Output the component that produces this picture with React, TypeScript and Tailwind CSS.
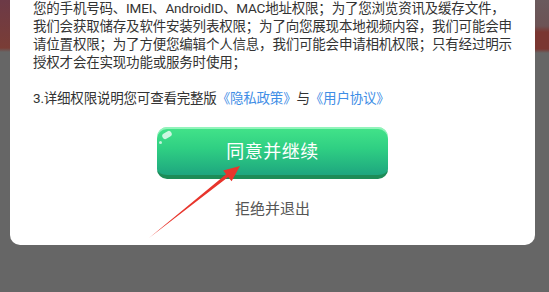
const lines = [
  "您的手机号码、IMEI、AndroidID、MAC地址权限；为了您浏览资讯及缓存文件，",
  "我们会获取储存及软件安装列表权限；为了向您展现本地视频内容，我们可能会申",
  "请位置权限；为了方便您编辑个人信息，我们可能会申请相机权限；只有经过明示",
  "授权才会在实现功能或服务时使用；",
];

const Arrow = () => (
  <svg
    className="absolute left-0 top-0 pointer-events-none"
    width="549"
    height="292"
    viewBox="0 0 549 292"
  >
    <polygon
      points="149,238 228.2,177.0 231.6,181.2 240,166 223.2,170.6 226.1,174.2"
      fill="#e8352c"
    />
  </svg>
);

const AgreeButton = () => (
  <button className="relative w-[231px] h-[52px] rounded-[10px] border-b-[4px] border-[#1d8c57] bg-[linear-gradient(to_bottom,#43e489,#2fcf83_45%,#1ea67f)] shadow-[inset_0_2px_0_rgba(200,255,220,0.6)] flex items-center justify-center">
    <span className="absolute left-[5px] top-[5px] w-[10px] h-[6px] rounded-full bg-white/75 -rotate-[30deg]" />
    <span className="absolute left-[2px] top-[14px] w-[3px] h-[3px] rounded-full bg-white/70" />
    <span className="text-[18px] leading-[24px] text-white tracking-[0.5px] mt-[1px]">
      同意并继续
    </span>
  </button>
);

export default function App() {
  return (
    <div
      className="relative w-[549px] h-[292px] overflow-hidden bg-[#666666] flex"
      style={{ fontFamily: 'Roboto, "Noto Sans CJK SC", sans-serif' }}
    >
      {/* left strip of dimmed background */}
      <div className="w-[10px] h-full bg-[linear-gradient(to_bottom,#6c3a47_0px,#7a3d36_48px,#666666_52px)]" />

      <div className="w-[525px] flex flex-col">
        <div className="bg-white rounded-b-[10px] flex flex-col items-center pb-[26px]">
          <div className="self-stretch px-[23px] -mt-[1.5px] text-[13.5px] tracking-[-0.2px] leading-[18px] text-[#333333] whitespace-nowrap">
            {lines.map((l) => (
              <div key={l}>{l}</div>
            ))}
            <div>&nbsp;</div>
            <div>
              3.详细权限说明您可查看完整版
              <span className="text-[#3f8ee6]">《隐私政策》</span>与
              <span className="text-[#3f8ee6]">《用户协议》</span>
            </div>
          </div>

          <div className="mt-[20.5px]">
            <AgreeButton />
          </div>

          <div className="mt-[20px] text-[15px] leading-[20px] text-[#555555]">
            拒绝并退出
          </div>
        </div>
      </div>

      {/* right strip of dimmed background */}
      <div className="flex-1 h-full bg-[linear-gradient(to_bottom,#6a5a5d_0px,#6c5355_26px,#7a3631_32px,#7a3631_49px,#666666_53px)]" />

      <Arrow />
    </div>
  );
}
